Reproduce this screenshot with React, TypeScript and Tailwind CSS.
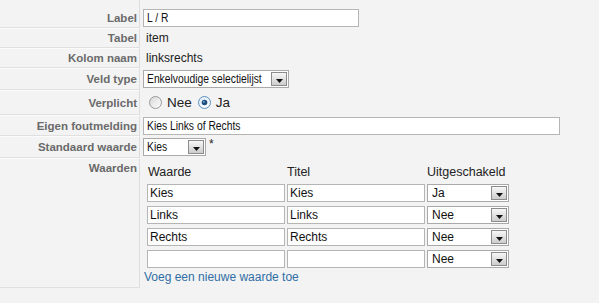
import React from "react";

const narrow = "font-['Liberation_Sans',Arial,sans-serif] text-[12px] text-[#111]";

function Narrow({ children }: { children?: React.ReactNode }) {
  return <span className="inline-block origin-left scale-x-[0.86] whitespace-nowrap">{children}</span>;
}

function Arrow() {
  return (
    <span className="flex h-full w-[16px] shrink-0 items-center justify-center border border-[#8c8c8c] bg-gradient-to-b from-[#f7f7f7] to-[#cdcdcd]">
      <svg width="7" height="4" viewBox="0 0 7 4" className="mt-[3px]">
        <path d="M0 0h7L3.5 4z" fill="#111" />
      </svg>
    </span>
  );
}

function Select({ w, text, cls, n }: { w: string; text: string; cls: string; n?: boolean }) {
  return (
    <div className={`flex h-[18px] ${w} items-stretch border border-[#a9a9a9] bg-white p-[1px]`}>
      <span className={`flex flex-1 items-center overflow-hidden pl-[2px] leading-none ${cls}`}>
        {n ? <Narrow>{text}</Narrow> : text}
      </span>
      <Arrow />
    </div>
  );
}

function Input({ w, text, cls }: { w: string; text?: string; cls: string }) {
  return (
    <div className={`flex h-[18px] ${w} items-center border border-[#b5b5b5] bg-white pl-[3px] leading-none ${cls}`}>
      <Narrow>{text}</Narrow>
    </div>
  );
}

function Radio({ checked }: { checked?: boolean }) {
  return (
    <svg width="13" height="13" viewBox="0 0 13 13">
      <defs>
        <linearGradient id={checked ? "rg1" : "rg0"} x1="0" y1="0" x2="1" y2="1">
          <stop offset="0" stopColor={checked ? "#dceaf6" : "#d6d6d6"} />
          <stop offset="1" stopColor="#ffffff" />
        </linearGradient>
      </defs>
      <circle cx="6.5" cy="6.5" r="6" fill={`url(#${checked ? "rg1" : "rg0"})`} stroke={checked ? "#5d8fbd" : "#9a9a9a"} strokeWidth="1" />
      {checked && <circle cx="6.5" cy="6.5" r="2.8" fill="#1e4f7c" />}
      {checked && <circle cx="5.8" cy="5.8" r="1" fill="#6fa3d2" />}
    </svg>
  );
}

function Row({
  label,
  h,
  first,
  top,
  children,
}: {
  label: string;
  h: string;
  first?: boolean;
  top?: boolean;
  children?: React.ReactNode;
}) {
  return (
    <div className={`flex ${h}`}>
      <div
        className={`flex w-[140px] shrink-0 justify-end border-r border-b border-r-[#dddddd] border-b-[#e0e0e0] pr-[2px] text-[11.5px] font-bold leading-[14px] text-[#6a6a6a] ${
          first ? "pt-[9px] items-center" : "border-t border-t-[#fbfbfb]"
        } ${top ? "items-start pt-[2px]" : "items-center"}`}
      >
        {label}
      </div>
      <div
        className={`flex flex-1 ${first ? "pt-[9px] pb-[1px]" : "py-[1px]"} ${
          top ? "flex-col items-start" : "items-center"
        } pl-[3px]`}
      >
        {children}
      </div>
    </div>
  );
}

export default function App() {
  const rows = [
    { w: "Kies", t: "Kies", u: "Ja" },
    { w: "Links", t: "Links", u: "Nee" },
    { w: "Rechts", t: "Rechts", u: "Nee" },
    { w: "", t: "", u: "Nee" },
  ];
  const tbl = "font-['Liberation_Sans',Arial,sans-serif] text-[12px] text-[#111]";
  return (
    <div className="h-[303px] w-[599px] overflow-hidden bg-[#f3f3f3] font-['Liberation_Sans',Arial,sans-serif] text-[12px] text-[#222]">
      <Row label="Label" h="h-[28px]" first>
        <Input w="w-[216px]" text="L / R" cls={narrow} />
      </Row>
      <Row label="Tabel" h="h-[20px]">
        <span className="ml-[3px] leading-[14px]">item</span>
      </Row>
      <Row label="Kolom naam" h="h-[20px]">
        <span className="ml-[3px] leading-[14px]">linksrechts</span>
      </Row>
      <Row label="Veld type" h="h-[22px]">
        <Select w="w-[146px]" text="Enkelvoudige selectielijst" cls={narrow} n />
      </Row>
      <Row label="Verplicht" h="h-[25px]">
        <div className="ml-[6px] flex items-center text-[13.5px] leading-[16px] text-[#222]">
          <Radio />
          <span className="ml-[5px]">Nee</span>
          <span className="ml-[6px] flex">
            <Radio checked />
          </span>
          <span className="ml-[5px]">Ja</span>
        </div>
      </Row>
      <Row label="Eigen foutmelding" h="h-[21px]">
        <Input w="w-[417px]" text="Kies Links of Rechts" cls={narrow} />
      </Row>
      <Row label="Standaard waarde" h="h-[22px]">
        <div className="flex items-start">
          <Select w="w-[63px]" text="Kies" cls={narrow} n />
          <span className="ml-[3px] text-[12px] leading-[12px] text-[#222]">*</span>
        </div>
      </Row>
      <Row label="Waarden" h="h-[130px]" top>
        <div className="pl-[4px] pt-[5px]">
          <div className="grid grid-cols-[140px_140px_82px] text-[12.5px] leading-[16px] text-[#222]">
            <span className="pl-[1px]">Waarde</span>
            <span>Titel</span>
            <span>Uitgeschakeld</span>
          </div>
          <div className="mt-[4px] flex flex-col gap-[4px]">
            {rows.map((r, i) => (
              <div key={i} className="grid grid-cols-[140px_140px_82px]">
                <div className={`flex h-[18px] w-[138px] items-center border border-[#b5b5b5] bg-white pl-[2px] leading-none ${tbl}`}>{r.w}</div>
                <div className={`flex h-[18px] w-[138px] items-center border border-[#b5b5b5] bg-white pl-[2px] leading-none ${tbl}`}>{r.t}</div>
                <Select w="w-[82px]" text={r.u} cls={`pl-[3px] ${tbl}`} />
              </div>
            ))}
          </div>
          <div className="mt-[2px] -ml-[3px] text-[12px] leading-[14px] text-[#2f6ea5]">Voeg een nieuwe waarde toe</div>
        </div>
      </Row>
    </div>
  );
}
